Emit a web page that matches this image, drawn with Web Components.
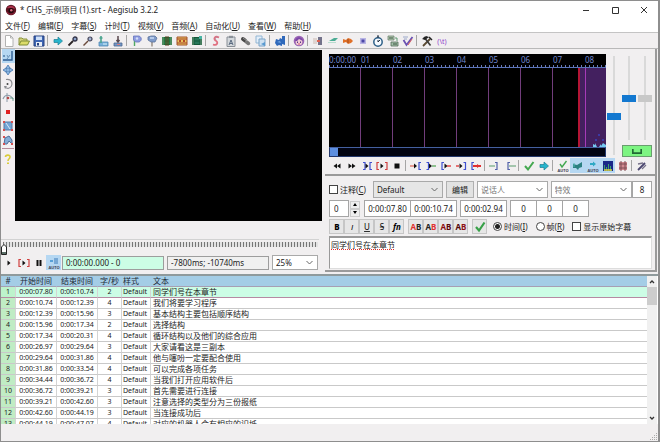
<!DOCTYPE html>
<html lang="zh-CN">
<head>
<meta charset="utf-8">
<title>CHS_示例项目 (1).srt - Aegisub 3.2.2</title>
<style>
html,body{margin:0;height:100%}
body{font:8px/12px "Noto Sans","Noto Sans CJK SC",sans-serif;color:#222;background:#f1eff0}
</style>
</head>
<body>
<aegi-window></aegi-window>
<script>
const AB=(a,b)=>`<text x="6" y="9" font-size="8" font-weight="700" text-anchor="middle"><tspan fill="${a}">A</tspan><tspan fill="${b}">B</tspan></text>`;
const AUTO='<text x="6" y="12" font-size="4" font-weight="700" text-anchor="middle" fill="#445">AUTO</text>';
const br=(x,d,c)=>`<path d="M${x+d*2} 2.5H${x}V9.5H${x+d*2}" fill="none" stroke="${c}" stroke-width="1.2"/>`;
const tri=(x,c)=>`<path d="M${x} 3.5L${x+3} 6L${x} 8.5Z" fill="${c}"/>`;
const film=(c,m)=>`<path d="M1 2H11V10H1Z" fill="${c}"/><path d="M3.5 3H8.5V9H3.5Z" fill="${m}"/><path d="M2 2.500V10M10 2.500V10" stroke="#d8e8c8" stroke-dasharray="1 1"/><path d="M3.500 6H8.500" stroke="${c}"/>`;
const ICONS={
 logo:'<circle cx="6" cy="6" r="5.200" fill="#5b1420"/><path d="M2 4C4 1 9 1 10 5L7 4Z" fill="#a8304a"/><circle cx="6" cy="6.500" r="2.600" fill="#23070d"/><circle cx="6.300" cy="6.300" r="1.200" fill="#d8707f"/><path d="M2 8C4 11 8 11 10 8" fill="none" stroke="#8c2038"/>',
 new:'<path d="M2.500.500H7.500L10 3V11.500H2.500Z" fill="#fff" stroke="#b2b2b2"/><path d="M7.500.500V3H10" fill="none" stroke="#b2b2b2"/>',
 open:'<path d="M1 10V3H4L5 4H9V6" fill="#d3d27a" stroke="#8b9440"/><path d="M1 10L3 6H11.500L9.500 10Z" fill="#dcdc6a" stroke="#7f8c36"/>',
 save:'<path d="M1 1H11V11H1Z" fill="#3f66b4" stroke="#27417f"/><path d="M3 1.500H9V5H3Z" fill="#cfe0f8"/><path d="M3 7H9V11H3Z" fill="#e9eef6"/><path d="M4 8H6V10.500H4Z" fill="#27417f"/>',
 jump:'<path d="M2 4.500H6V2L10.500 6L6 10V7.500H2Z" fill="#27b4cc" stroke="#1b7e94" stroke-width=".7"/>',
 zoomin:'<path d="M1.500 10.500L6 6" stroke="#2a2426" stroke-width="1.800"/><circle cx="8" cy="4" r="2" fill="#8ba3cc" stroke="#333348" stroke-width="1.300"/>',
 zoomout:'<path d="M1.500 10.500L6 6" stroke="#6b4a3a" stroke-width="1.500"/><circle cx="8" cy="4" r="2" fill="#a4b4d4" stroke="#444458" stroke-width="1.200"/>',
 snapa:'<path d="M2 7H11V11H2Z" fill="#78b2da" stroke="#5088b4" stroke-width=".8"/><path d="M4 1V8M2.500 3H5.500" fill="none" stroke="#4ca48e" stroke-width="1.600"/><path d="M6 9H10" stroke="#d9f0fa"/>',
 snapb:'<path d="M2 8H10V11H2Z" fill="#7397c7" stroke="#4c6890" stroke-width=".8"/><path d="M6 1V7M4.500 5L6 7L7.500 5" fill="none" stroke="#59484e" stroke-width="1.500"/><path d="M5 9.500H8" stroke="#d68080"/>',
 flaga:'<path d="M3.500 3V11" stroke="#50aa62" stroke-width="1.400"/><path d="M2.500 1H8C11 2 11 6 8 7H4.500L2.500 5Z" fill="#8e9be0" stroke="#6475bb" stroke-width=".8"/><circle cx="6" cy="3.500" r="1.200" fill="#d3def8"/>',
 flagb:'<path d="M6 6V11.500" stroke="#9a8f86" stroke-width="1.500"/><path d="M2 2L5 1H9L11 3L9 7H5L2 5Z" fill="#7f9bca" stroke="#5b7299" stroke-width=".8"/><path d="M4 3H8" stroke="#c9dbf6" stroke-width="1.500"/>',
 filma:film('#1e6e3c','#2d8a50')+'<path d="M5 1V11M7 1V11" stroke="#5c3c1c"/>',
 filmb:'<path d="M1 2H11V10H1Z" fill="#e9c55e" stroke="#a4522c"/><path d="M1 4H11M1 8H11" stroke="#a4402a"/><path d="M3 5H5V7H3ZM7 5H9V7H7Z" fill="#b64a28"/>',
 filmc:film('#14583a','#27775a')+'<path d="M8 1H11V4H8Z" fill="#48b3a4"/>',
 style:'<path d="M9 2.500C5 .5 3 3.500 5.500 5.500C9 7.500 7 11 3 9.500" fill="none" stroke="#e07080" stroke-width="1.800"/><path d="M8 2C6 1.500 4.500 3 6 5" fill="none" stroke="#b88aa0"/>',
 props:'<path d="M2 2H10V11.500H2Z" fill="#d4d8dc" stroke="#888e96"/><path d="M4 .8H8V3H4Z" fill="#8a9098"/><path d="M4 10L6 5L8 10M5 8.500H7" fill="none" stroke="#596a80"/>',
 attach:'<path d="M3 4L5 5.500" stroke="#464646" stroke-width="4" stroke-linecap="round"/><path d="M6.500 7L8.500 8.500" stroke="#777" stroke-width="3.500" stroke-linecap="round"/><path d="M3 3L7 6" stroke="#aaa" stroke-width=".8"/>',
 copy:'<path d="M1 1H7V8H1Z" fill="#e4effa" stroke="#92b6d4"/><path d="M4 4H10V11H4Z" fill="#cfe1f1" stroke="#7aa4c8"/><path d="M6 9L10 7V11Z" fill="#5a9ad0"/>',
 auto:'<path d="M2 4L5 5L6 3L8 4L8 1H11V10L8 9L8 11L5 10L3 11L1 8Z" fill="#2f69bb"/><path d="M3 7L6 6L7 8Z" fill="#72a6e2"/>',
 assdraw:'<circle cx="6" cy="6" r="5.300" fill="#9a64b4"/><circle cx="6" cy="7" r="3.300" fill="#f0ccd4"/><path d="M2 6C3 1 9 1 10 6L8 5L6 4L4 6Z" fill="#7d48a8"/><path d="M4.500 6.500V8M7.500 6.500V8" stroke="#5a3888"/><path d="M5 9H7" stroke="#cc5878"/>',
 shift:'<path d="M2 3V9M4 3V9" stroke="#ccbab2"/><path d="M6 2H10V10H6Z" fill="#73728a"/><path d="M5 5H8V7H5Z" fill="#e06050"/>',
 pass:'<path d="M2 6L7 3H11L8 6Z" fill="#4bac94"/><path d="M1 7.500H9" stroke="#b9dccf"/>',
 fish:'<path d="M1 4L4 5L6 3L9 4L11 6L9 8L6 9L4 7L1 8Z" fill="#e07028"/><path d="M6 4V8" stroke="#a04c20"/>',
 dot:'<path d="M3 3H9V9H3Z" fill="#b8b4e4"/><path d="M4.500 4.500H7.500V7.500H4.500Z" fill="#4c48a8"/>',
 clock:'<circle cx="6" cy="7" r="4.200" fill="#f6faff" stroke="#2e6088" stroke-width="1.500"/><path d="M5 1H7M6 1V3M6 7L8 5M6 7V5" stroke="#234" fill="none"/>',
 spell:'<path d="M1 1H7V5H1Z" fill="#b2c8b0" stroke="#6c8470" stroke-width=".8"/><path d="M4 7H11V11H4Z" fill="#a2bea8" stroke="#546c58" stroke-width=".8"/><path d="M2 3H6M6 9H10" stroke="#3a5540"/><path d="M8 3H10V6" fill="none" stroke="#5d9a70"/>',
 check2:'<path d="M1.500 5L4.500 10L10.500 2" fill="none" stroke="#6a52b2" stroke-width="1.800"/><path d="M1 2H6M2 4H5" stroke="#9ba8ca"/><path d="M6 10L10 4" stroke="#d86060"/>',
 tools:'<path d="M2 11L9 4" stroke="#5a4a33" stroke-width="1.800"/><path d="M3 2L9.500 10.500" stroke="#3d3d3d" stroke-width="1.600"/><path d="M1 4L5 1L8 2L4 5Z" fill="#222"/><path d="M8 2L11 5" stroke="#222" stroke-width="1.500"/>',
 tag:'<text x="6" y="8.500" font-size="7" text-anchor="middle" fill="#9040cc">(\\t)</text>',
 std:'<path d="M10 1V10H1" fill="none" stroke="#2c5c92" stroke-width="1.400"/><path d="M1 5L3 7M3 5L1 7M5 5L6 7M8 5L5 9" stroke="#5580a8" stroke-width=".8"/>',
 move:'<path d="M6 1L8 4H7V5H8V4L11 6L8 8V7H7V8H8L6 11L4 8H5V7H4V8L1 6L4 4V5H5V4H4Z" fill="#8ab4e0" stroke="#4878b0" stroke-width=".8"/>',
 rotz:'<path d="M4 1.500C11-0 12 9 6 10.500L3 9.500" fill="none" stroke="#8b8b90" stroke-width="1.200"/><circle cx="5.500" cy="6" r="1" fill="#444"/><path d="M2 8L5 8L3 11Z" fill="#8b8b90"/>',
 rotxy:'<path d="M1 7C3 2 8 2 11 7" fill="none" stroke="#8c9ba8" stroke-width="1.200"/><path d="M5 1V10" stroke="#8c9ba8"/><circle cx="6" cy="6" r="1.300" fill="#b54848"/><path d="M8 6H11V9" fill="none" stroke="#6f9f90"/>',
 scale:'<path d="M4 4H8V8H4Z" fill="#e02020"/>',
 clip:'<path d="M2 2H10V10H2Z" fill="#72a5d6" stroke="#5878a0"/><path d="M4 3L8 9" stroke="#d6e8f8"/><path d="M1 1H3V3H1ZM9 1H11V3H9ZM1 9H3V11H1ZM9 9H11V11H9Z" fill="#d65050"/>',
 vclip:'<path d="M2 10L3 4L7 2L10 6V10L7 7L5 10Z" fill="#86aed8" stroke="#506e98"/><path d="M1 2H3V4H1ZM1 9H3V11H1ZM9 9H11V11H9Z" fill="#d65050"/>',
 help:'<path d="M3.500 4C3.500 1.500 8.500 1.500 8 4C8 6 6 5.500 6 8" fill="none" stroke="#d9cc3a" stroke-width="1.600"/><path d="M5 9.500H7V11H5Z" fill="#d9cc3a"/>',
 play:tri(4.500,'#111'),
 playline:br(1,1,'#d04040')+tri(4.500,'#111')+br(11,-1,'#d04040'),
 pause:'<path d="M3.500 3H5.500V9H3.500ZM6.500 3H8.500V9H6.500Z" fill="#111"/>',
 autoscroll:'<path d="M6 2H10M6 4H10M6 6H10" stroke="#3878b8"/><path d="M2 4H5" stroke="#58a0d8" stroke-width="2"/>'+AUTO,
 prev:'<path d="M6 3.500V8.500L2.500 6ZM9.500 3.500V8.500L6 6Z" fill="#111"/>',
 next:'<path d="M2.500 3.500V8.500L6 6ZM6 3.500V8.500L9.500 6Z" fill="#111"/>',
 psel:br(4,-1,'#4050d0')+tri(4.500,'#111')+br(9,1,'#4050d0'),
 stop:'<path d="M3.500 3.500H8.500V8.500H3.500Z" fill="#111"/>',
 pbefore:'<path d="M0 6H4" stroke="#e07060" stroke-width="1.300"/>'+tri(4,'#111')+br(9,1,'#4050d0'),
 pafter:br(3.500,-1,'#4050d0')+tri(4,'#111')+'<path d="M7 6H11" stroke="#58a858" stroke-width="1.300"/>',
 pbeg:br(2,1,'#4050d0')+tri(4.500,'#111')+'<path d="M7 6H11" stroke="#e04848" stroke-width="1.500"/>',
 pend:'<path d="M1 6H4" stroke="#e04848" stroke-width="1.500"/>'+tri(4.500,'#111')+br(10.500,-1,'#4050d0'),
 ptoend:br(2,1,'#4050d0')+'<path d="M3 6H11" stroke="#e03030" stroke-width="2"/><path d="M7 4L10 6L7 8Z" fill="#e03030"/>',
 leadin:'<path d="M0 6H6" stroke="#71a880" stroke-width="1.200"/>'+br(8,-1,'#5060a8'),
 leadout:br(4,1,'#5060a8')+'<path d="M5 6H12" stroke="#71a880" stroke-width="1.200"/>',
 ok:'<path d="M2 6L5 9.500L10.500 2" fill="none" stroke="#44a850" stroke-width="2"/>',
 autook:'<path d="M3 4L5 7L9.500 1" fill="none" stroke="#44a850" stroke-width="1.400"/>'+AUTO,
 medusa:'<path d="M1 4L5 5L10 2V7L7 8L6 10L4 8H1Z" fill="#2b8082"/><path d="M2 3V7" stroke="#51b4b0"/>',
 autojump:'<path d="M3 3H6V1.500L9 4L6 6.500V5H3Z" fill="#2fa9c4"/>'+AUTO,
 spectrum:'<path d="M1 1H11V11H1Z" fill="#1a2888"/><path d="M2.500 5V11M4.500 7V11M6.500 4V11M8.500 6V11" stroke="#3ca070"/><path d="M2 10H10" stroke="#e2d040" stroke-width="1.500"/>',
 grid:'<path d="M2 2H10V10H2Z" fill="#d08890"/><path d="M4 1V11M8 1V11M2 4H10M2 8H10" stroke="#7f4c54"/>',
 karaoke:'<path d="M2 10L9 3" stroke="#4a4670" stroke-width="1.800"/><path d="M2 4L7 3M6 9L10 5" stroke="#77728a" stroke-width="1.300"/>',
 bold:'<text x="6" y="9" font-size="8" font-weight="800" text-anchor="middle">B</text>',
 italic:'<text x="6" y="9" font-size="8" font-family="Liberation Sans" font-style="italic" text-anchor="middle">I</text>',
 under:'<text x="6" y="9" font-size="8" text-decoration="underline" text-anchor="middle">U</text>',
 strike:'<text x="6" y="9" font-size="8" text-decoration="line-through" text-anchor="middle">S</text>',
 font:'<text x="6" y="9" font-size="8" font-style="italic" font-weight="700" text-anchor="middle">fn</text>',
 ab1:AB('#e03030','#222'),ab2:AB('#222','#e03030'),ab3:AB('#8c0d10','#5a080a'),ab4:AB('#50080a','#8c1014'),
 commit:'<path d="M2 6L5 9.500L10.500 1.500" fill="none" stroke="#38a048" stroke-width="2.200"/>',
 min:'<path d="M3 6.500H9" stroke="#333"/>',
 max:'<path d="M3.500 3.500H9.500V9.500H3.500Z" fill="none" stroke="#333"/>',
 close:'<path d="M3 3L9 9M9 3L3 9" stroke="#333"/>'
};
const define=(name,html,init)=>{
 customElements.define(name,class extends HTMLElement{
  connectedCallback(){
   if(this.shadowRoot)return;
   const r=this.attachShadow({mode:'open'});
   const t=document.createElement('template');
   t.innerHTML='<style>*{box-sizing:border-box}button,input,select,textarea{font:inherit;color:inherit;margin:0}</style>'+(typeof html==='function'?html(this):html);
   r.append(t.content.cloneNode(true));
   if(init)init(this,r);
  }
 });
};

define('aegi-icon',e=>`<style>:host{display:block;width:12px;height:12px;flex:none}svg{display:block;width:100%;height:100%;overflow:visible}</style><svg viewBox="0 0 12 12" aria-hidden="true">${ICONS[e.getAttribute('name')]||''}</svg>`);

define('aegi-button',e=>`<style>
:host{display:block;flex:none;width:15px;height:15px}
button{display:flex;align-items:center;justify-content:center;width:100%;height:100%;padding:0;border:0;background:none}
:host([on]) button{background:#b5d7f2}
:host([framed]) button{border:1px solid #c6c6c6;background:#e6e6e6}
:host([small]){height:14px;width:13px}
:host([wide]){width:29px;height:18px}
</style><button aria-label="${e.getAttribute('name')}"><aegi-icon name="${e.getAttribute('name')}"></aegi-icon></button>`);

define('aegi-toolbar',e=>`<style>
:host{display:flex;align-items:center;height:15px}
:host([vertical]){flex-direction:column;height:auto}
i{flex:none;width:4px;height:11px;background:linear-gradient(90deg,transparent 1px,#a5a5a5 1px 2px,transparent 2px)}
:host([vertical]) i{width:12px;height:5px;background:linear-gradient(transparent 1px,#b58b9a 1px 2px,transparent 2px)}
</style>${e.getAttribute('items').trim().split(/\s+/).map(n=>n==='|'?'<i></i>':`<aegi-button name="${n.replace('*','')}"${n.endsWith('*')?' on':''}${e.hasAttribute('framed')?' framed':''}${e.hasAttribute('vertical')?' small':''}></aegi-button>`).join('')}`);

define('aegi-titlebar',`<style>
:host{display:flex;align-items:center;height:18px;padding-left:4px;background:#fff}
h1{flex:1;margin:0 0 0 3px;font-size:8px;font-weight:400;white-space:nowrap}
</style><aegi-icon name="logo"></aegi-icon><h1><slot></slot></h1>
<aegi-button wide name="min"></aegi-button><aegi-button wide name="max"></aegi-button><aegi-button wide name="close"></aegi-button>`);

define('aegi-menubar',()=>`<style>
:host{display:flex;gap:8px;height:14px;padding:0 4px;background:#fff;border-bottom:1px solid #c4c4c4}
button{border:0;padding:0;background:none;line-height:13px;white-space:nowrap}
</style>${[['文件','F'],['编辑','E'],['字幕','S'],['计时','T'],['视频','V'],['音频','A'],['自动化','U'],['查看','W'],['帮助','H']].map(([a,k])=>`<button>${a}(<u>${k}</u>)</button>`).join('')}`);

define('aegi-select',e=>`<style>
:host{display:block;position:relative}
select,input{display:block;width:100%;height:100%;padding:0 12px 0 5px;border:1px solid #a9a9a9;border-radius:0;appearance:none;outline:0;
background:var(--fill,#fff) no-repeat right 4px center/7px 5px url("data:image/svg+xml,%3Csvg xmlns='http://www.w3.org/2000/svg' viewBox='0 0 7 5'%3E%3Cpath d='M.5 1L3.500 4L6.500 1' fill='none' stroke='%23666'/%3E%3C/svg%3E")}
select{padding-left:3px}
input{padding-left:3px}
::placeholder{color:#777;opacity:1}
</style>${e.hasAttribute('combo')?`<input aria-label="${e.getAttribute('value')}" placeholder="${e.getAttribute('value')}">`:`<select aria-label="${e.getAttribute('label')}"><option>${e.getAttribute('value')}</option></select>`}`);

define('aegi-video',`<style>
:host{display:flex;flex-direction:column;min-width:0}
.top{display:flex;flex:1}
.screen{flex:1;background:#000;margin-top:1px}
.tools{width:14px;background:#f3eff1}
.gap{height:18px}
.seek{position:relative;height:16px;margin-right:3px;border-top:1px solid #d2d2d2}
.ticks{height:5px;margin:2px 1px 0 2px;background:repeating-linear-gradient(90deg,#777 0 1px,#e2e2e2 1px 3px)}
.seek svg{position:absolute;left:0;top:4px;width:6px;height:11px}
.ctl{display:flex;align-items:center;height:15px;margin-bottom:4px;padding-right:4px}
.ctl input{min-width:0;flex:1;height:14px;padding:0 3px;border:1px solid #9d9d9d;background:#f0f0f0;margin-right:3px;outline:0}
.ctl .pos{background:#ccfde5;margin-left:1px}
.ctl aegi-select{width:46px;height:15px}
</style>
<div class="top"><aegi-toolbar class="tools" vertical items="std* move rotz rotxy scale clip vclip | help"></aegi-toolbar><div class="screen"></div></div>
<div class="gap"></div>
<div class="seek"><div class="ticks"></div><svg viewBox="0 0 6 11"><path d="M.500 3L3 .500L5.500 3V10.500H.500Z" fill="#fff" stroke="#222"/><path d="M1 8H5V10H1Z" fill="#5b7068"/></svg></div>
<div class="ctl"><aegi-toolbar items="play playline pause autoscroll*"></aegi-toolbar><input class="pos" aria-label="位置" value="0:00:00.000 - 0"><input aria-label="相对时间" value="-7800ms; -10740ms"><aegi-select label="缩放" value="25%"></aegi-select></div>`);

define('aegi-wave',()=>`<style>
:host{display:flex;flex-direction:column;min-width:0;background:#000;overflow:hidden}
.ruler{display:flex;height:14px;color:#7086cf;background:#000;border-bottom:1px solid #5b74b8;
 background-image:repeating-linear-gradient(90deg,#6878b8 0 1px,transparent 1px 4px);background-size:100% 2px;background-repeat:no-repeat;background-position:0 bottom}
.ruler span{flex:0 0 32px;line-height:12px;white-space:nowrap}
.view{flex:1;display:flex;justify-content:flex-end;background:repeating-linear-gradient(90deg,transparent 0 31px,#713d7b 31px 32px)}
.sel{display:flex;align-items:flex-end;width:28px;border-left:2px solid #b41535;background:linear-gradient(90deg,transparent 5px,#a63bb8 5px 6px,transparent 6px),#43205f}
.sel svg{width:100%;height:14px}
.scroll{height:10px;border:1px solid #24386c;border-top-color:#4460a0;background:#020412}
.scroll div{width:8px;height:100%;background:#5d8fe0}
</style><div class="ruler">${['0:00:00','01','02','03','04','05','06','07','08'].map(t=>`<span>${t}</span>`).join('')}</div>
<div class="view"><div class="sel"><svg viewBox="0 0 26 14"><path d="M13 14V11L15 12V10L17 14ZM19 14L21 11V13L23 10L26 12V14Z" fill="#74c8ee"/><path d="M18 1H20V3H18ZM15 6H17V8H15ZM22 6H24V8H22Z" fill="#3c3aa4"/></svg></div></div>
<div class="scroll"><div></div></div>`);

define('aegi-audio',`<style>
:host{display:block;padding:5px 3px 0 4px;border:solid #9a9a9a;border-width:0 2px 1px 0}
.main{display:flex;height:103px}
aegi-wave{flex:1}
.s1{width:16px;height:100%;display:flex;justify-content:center;padding:2px 0}
.col{width:30px;display:flex;flex-direction:column;justify-content:space-between}
.pair{display:flex;height:88px;padding:2px 0;justify-content:space-between}
input{writing-mode:vertical-lr;direction:rtl;appearance:none;width:14px;height:100%;background:linear-gradient(90deg,transparent 6px,#d9d9d9 6px 8px,transparent 8px)}
input::-webkit-slider-thumb{appearance:none;width:14px;height:7px;background:#1378d0}
input:disabled::-webkit-slider-thumb{background:#c8c8c8}
.link{height:12px;padding:0;border:1px solid #6a9d6f;background:#7df482;display:flex;align-items:center;justify-content:center}
.link svg{width:10px;height:5px}
aegi-toolbar{height:17px}
</style>
<div class="main"><aegi-wave></aegi-wave><div class="s1"><input type="range" aria-label="水平缩放" value="38"></div>
<div class="col"><div class="pair"><input type="range" aria-label="垂直缩放" value="50"><input type="range" aria-label="音量" value="50" disabled></div>
<button class="link" aria-label="链接"><svg viewBox="0 0 12 6"><path d="M1 0V5H11V0" fill="none" stroke="#226a35" stroke-width="2"/></svg></button></div></div>
<aegi-toolbar items="prev next psel playline stop | pbefore pafter pbeg pend ptoend | leadin leadout | ok jump | autook medusa* autojump* spectrum* grid | karaoke"></aegi-toolbar>`);

define('aegi-edit',`<style>
:host{display:flex;flex-direction:column;gap:2px;padding:5px 3px 1px 4px;border:solid #9a9a9a;border-width:1px 2px 2px 0}
.row{display:flex;align-items:center;height:17px}
.row.tools{height:15px}
label{display:flex;align-items:center;gap:2px;white-space:nowrap;line-height:12px}
input[type=checkbox],input[type=radio]{appearance:none;flex:none;width:9px;height:9px;border:1px solid #444;background:#fff}
input[type=radio]{border-radius:50%}
input[type=radio]:checked{background:radial-gradient(circle,#222 2px,#fff 3px)}
.c{width:44px}
.sel{width:70px;height:17px;--fill:#e6e6e6}
.btn{width:28px;height:17px;padding:0;border:1px solid #b0b0b0;background:#e2e2e2;margin:0 3px}
.actor{flex:71;height:17px;margin-right:3px;min-width:0}
.effect{flex:82;height:17px;min-width:0}
input.t{height:17px;border:1px solid #a5a5a5;background:#fff;padding:0;text-align:center;border-radius:0;outline:0}
.n{width:20px}.w{width:47px}.z{width:27px}
.j{margin-left:-1px}
.row input.first{text-align:left;padding-left:4px}
.gap{margin-left:3px}
.spin{display:flex;flex-direction:column;margin:0 4px 0 1px}
.spin button{width:10px;height:8px;padding:0;border:1px solid #ccc;background:#eee;display:flex;align-items:center;justify-content:center}
.spin svg{width:4px;height:3px}
textarea{display:block;width:100%;height:33px;resize:none;border:1px solid #999;border-top-width:2px;border-right-color:#ddd;border-bottom-color:#ddd;padding:0 1px;background:#fff;outline:0;line-height:13px;text-decoration-line:underline;text-decoration-style:dotted;text-decoration-color:#e03030;text-decoration-thickness:1px;text-underline-offset:1px}
.g{margin-left:4px}
.r1{margin-left:6px}.r2{margin-left:8px}.r3{margin-left:8px}
</style>
<div class="row"><label class="c"><input type="checkbox"><span>注释(<u>C</u>)</span></label><aegi-select class="sel" label="样式" value="Default"></aegi-select><button class="btn">编辑</button><aegi-select combo class="actor" value="说话人"></aegi-select><aegi-select combo class="effect" value="特效"></aegi-select><input class="t n" aria-label="字数" value="8"></div>
<div class="row"><input class="t n first" aria-label="层" value="0"><div class="spin"><button aria-label="增加"><svg viewBox="0 0 4 3"><path d="M0 3L2 0L4 3Z"/></svg></button><button aria-label="减少"><svg viewBox="0 0 4 3"><path d="M0 0L2 3L4 0Z"/></svg></button></div><input class="t w" aria-label="开始" value="0:00:07.80"><input class="t w j" aria-label="结束" value="0:00:10.74"><input class="t w gap" aria-label="时长" value="0:00:02.94"><input class="t z gap" aria-label="左边距" value="0"><input class="t z j" aria-label="右边距" value="0"><input class="t z j" aria-label="垂直边距" value="0"></div>
<div class="row tools"><aegi-toolbar framed items="bold italic under strike font"></aegi-toolbar><aegi-toolbar class="g" framed items="ab1 ab2 ab3 ab4"></aegi-toolbar><aegi-toolbar class="g" framed items="commit"></aegi-toolbar>
<label class="r1"><input type="radio" name="m" checked><span>时间(<u>I</u>)</span></label><label class="r2"><input type="radio" name="m"><span>帧(<u>R</u>)</span></label><label class="r3"><input type="checkbox"><span>显示原始字幕</span></label></div>
<textarea aria-label="字幕文本" spellcheck="false">同学们号在本章节</textarea>`);

const ROWS=[['0:00:07.80','0:00:10.74',2,'同学们号在本章节'],['0:00:10.74','0:00:12.39',4,'我们将要学习程序'],['0:00:12.39','0:00:15.96',3,'基本结构主要包括顺序结构'],['0:00:15.96','0:00:17.34',2,'选择结构'],['0:00:17.34','0:00:20.31',4,'循环结构以及他们的综合应用'],['0:00:26.97','0:00:29.64',3,'大家请看这是三副本'],['0:00:29.64','0:00:31.86',4,'他与噻吩一定要配合使用'],['0:00:31.86','0:00:33.54',4,'可以完成各项任务'],['0:00:34.44','0:00:36.72',4,'当我们打开应用软件后'],['0:00:36.72','0:00:39.21',3,'首先需要进行连接'],['0:00:39.21','0:00:42.60',3,'注意选择的类型分为三份报纸'],['0:00:42.60','0:00:44.19',3,'当连接成功后'],['0:00:44.19','0:00:47.07',4,'对应的机器人会有相应的识抵']];
define('aegi-grid',()=>`<style>
:host{display:flex;min-height:0;overflow:hidden;border-top:2px solid #8f9a9c;background:#fff}
.body{flex:1;overflow:hidden;min-width:0}
table{width:100%;border-collapse:separate;border-spacing:0;table-layout:fixed;font-size:7px}
th,td{height:11px;padding:0;line-height:10px;font-weight:400;text-align:center;white-space:nowrap;overflow:hidden;border-right:1px solid #d4d4d4;border-bottom:1px solid #c9c9c9}
th{background:#a4cde6;font-size:8px;border-right-color:#a4cde6;border-bottom-color:#a79fb4;color:#1d2a36}
td:first-child{background:#c0ecc4}
.s{text-align:left;padding-left:1px}
.x{text-align:left;padding-left:2px;font-size:8px;border-right:0}
.on td{background:#ccfde5;border-bottom-color:#b58aa2}
.on td:first-child{background:#bdf3cc}
.bar{width:10px;margin-right:1px;display:flex;flex-direction:column;align-items:center;background:#f0f0f0}
.bar svg{width:6px;height:11px}
.thumb{width:100%;height:18px;background:#cdcdcd;margin-bottom:auto}
</style>
<div class="body"><table><colgroup><col style="width:15px"><col style="width:41px"><col style="width:41px"><col style="width:24px"><col style="width:29px"><col></colgroup>
<thead><tr><th>#</th><th>开始时间</th><th>结束时间</th><th>字/秒</th><th class="s">样式</th><th class="x">文本</th></tr></thead>
<tbody>${ROWS.map((r,i)=>`<tr${i?'':' class="on"'}><td>${i+1}</td><td>${r[0]}</td><td>${r[1]}</td><td>${r[2]}</td><td class="s">Default</td><td class="x">${r[3]}</td></tr>`).join('')}</tbody></table></div>
<div class="bar"><svg viewBox="0 0 6 11"><path d="M1 7L3 5L5 7" fill="none" stroke="#333" stroke-width="1.300"/></svg><div class="thumb"></div><svg viewBox="0 0 6 11"><path d="M1 4L3 6L5 4" fill="none" stroke="#333" stroke-width="1.300"/></svg></div>`);

define('aegi-status',`<style>
:host{display:flex;justify-content:flex-end;align-items:flex-end;height:17px;background:#f1eff0}
svg{width:8px;height:8px}
</style><svg viewBox="0 0 8 8"><path d="M6 0H7V1H6ZM4 2H5V3H4ZM6 2H7V3H6ZM2 4H3V5H2ZM4 4H5V5H4ZM6 4H7V5H6ZM0 6H1V7H0ZM2 6H3V7H2ZM4 6H5V7H4ZM6 6H7V7H6Z" fill="#aaa"/></svg>`);

define('aegi-window',`<style>
:host{display:flex;flex-direction:column;height:100vh;box-sizing:border-box;border:1px solid #8e8e8e;border-right-width:2px;background:#f1eff0}
.bar{height:16px;border-bottom:1px solid #b9b9b9}
.mid{display:grid;grid-template-columns:minmax(0,321fr) minmax(0,332fr);gap:3px;padding-right:1px}
.right{display:flex;flex-direction:column;padding-bottom:2px}
aegi-edit{flex:1}
aegi-audio{flex:none}
aegi-grid{flex:1}
</style>
<aegi-titlebar>* CHS_示例项目 (1).srt - Aegisub 3.2.2</aegi-titlebar>
<aegi-menubar></aegi-menubar>
<aegi-toolbar class="bar" items="new open save | jump zoomin zoomout snapa snapb | flaga flagb filma filmb filmc | style props attach copy | auto | assdraw | shift pass fish dot clock spell check2 | tools tag"></aegi-toolbar>
<div class="mid"><aegi-video></aegi-video><div class="right"><aegi-audio></aegi-audio><aegi-edit></aegi-edit></div></div>
<aegi-grid></aegi-grid>
<aegi-status></aegi-status>`);
</script>
</body>
</html>
